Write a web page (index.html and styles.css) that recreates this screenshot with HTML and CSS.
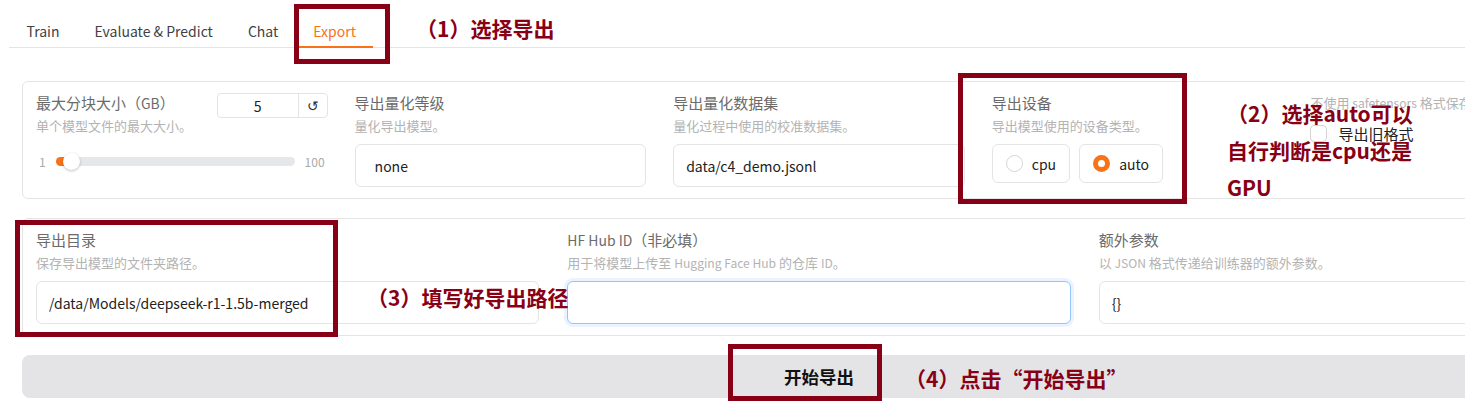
FILE: index.html
```html
<!DOCTYPE html>
<html lang="zh-CN">
<head>
    <meta charset="UTF-8">
    <meta name="viewport" content="width=device-width, initial-scale=1.0">
    <title>Export</title>
    <link rel="stylesheet" href="styles.css">
</head>
<body>
    <div class="app">
        <div class="tabs">
            <div class="tab">Train</div>
            <div class="tab">Evaluate &amp; Predict</div>
            <div class="tab">Chat</div>
            <div class="tab selected">Export</div>
        </div>

        <div class="panel">
            <div class="group row-five">
                <div class="field">
                    <div class="slider-head">
                        <span class="label">最大分块大小（<span class="en">GB</span>）</span>
                        <div class="number-box">
                            <input type="text" value="5">
                            <span class="reset">↺</span>
                        </div>
                    </div>
                    <span class="info">单个模型文件的最大大小。</span>
                    <div class="slider">
                        <span>1</span>
                        <div class="track">
                            <div class="fill"></div>
                            <div class="thumb"></div>
                        </div>
                        <span>100</span>
                    </div>
                </div>
                <div class="field">
                    <span class="label">导出量化等级</span>
                    <span class="info">量化导出模型。</span>
                    <input class="textbox dropdown" type="text" value="none">
                </div>
                <div class="field">
                    <span class="label">导出量化数据集</span>
                    <span class="info">量化过程中使用的校准数据集。</span>
                    <input class="textbox" type="text" value="data/c4_demo.jsonl">
                </div>
                <div class="field">
                    <span class="label">导出设备</span>
                    <span class="info">导出模型使用的设备类型。</span>
                    <div class="radios">
                        <label class="radio"><span class="dot"></span>cpu</label>
                        <label class="radio"><span class="dot checked"></span>auto</label>
                    </div>
                </div>
                <div class="field">
                    <span class="check-info">不使用 <span class="en">safetensors</span> 格式保存模型。</span>
                    <label class="check-row"><span class="check"></span>导出旧格式</label>
                </div>
            </div>

            <div class="group row-three">
                <div class="field">
                    <span class="label">导出目录</span>
                    <span class="info">保存导出模型的文件夹路径。</span>
                    <input class="textbox" type="text" value="/data/Models/deepseek-r1-1.5b-merged">
                </div>
                <div class="field">
                    <span class="label"><span class="en">HF Hub ID</span>（非必填）</span>
                    <span class="info">用于将模型上传至 <span class="en">Hugging Face Hub</span> 的仓库 <span class="en">ID</span>。</span>
                    <input class="textbox focused" type="text" value="">
                </div>
                <div class="field">
                    <span class="label">额外参数</span>
                    <span class="info">以 <span class="en">JSON</span> 格式传递给训练器的额外参数。</span>
                    <input class="textbox" type="text" value="{}">
                </div>
            </div>

            <div class="submit">开始导出</div>
        </div>
    </div>

    <!-- annotations drawn over the screenshot -->
    <div class="mark mark-tabs"></div>
    <div class="mark mark-device"></div>
    <div class="mark mark-dir"></div>
    <div class="mark mark-submit"></div>

    <div class="note note-1">（1）选择导出</div>
    <div class="note note-2">（2）选择auto可以<br>自行判断是cpu还是<br>GPU</div>
    <div class="note note-3">（3）填写好导出路径</div>
    <div class="note note-4">（4）点击“开始导出”</div>
</body>
</html>
```

FILE: styles.css
```css
body {
    margin: 0;
    width: 1465px;
    height: 412px;
    overflow: hidden;
    position: relative;
    background-color: white;
    font-family: "Noto Sans CJK SC", "Noto Sans", sans-serif;
    color: #27272a;
}
.en {
    font-size: 0.93em;
}
.app {
    width: 1640px;
    padding-left: 9px;
}
.tabs {
    display: flex;
    height: 47px;
    border-bottom: 1px solid #e4e4e7;
}
.tab {
    position: relative;
    height: 47px;
    box-sizing: border-box;
    padding: 20px 17.5px 0;
    font-size: 14px;
    line-height: 22px;
    color: #3f3f46;
}
.tab.selected {
    color: #f97316;
}
.tab.selected::after {
    content: "";
    position: absolute;
    left: 0;
    right: 0;
    bottom: -1px;
    height: 2px;
    background-color: #f97316;
}
.panel {
    padding: 33px 0 0 13px;
}
.group {
    display: grid;
    width: 1566px;
    padding: 11px 13px;
    margin-bottom: 19px;
    border: 1px solid #e5e5e5;
    border-radius: 6px;
}
.row-five {
    grid-template-columns: repeat(5, 1fr);
    column-gap: 27px;
}
.row-three {
    grid-template-columns: repeat(3, 1fr);
    column-gap: 28px;
}
.field {
    display: flex;
    flex-direction: column;
    min-width: 0;
}
.label {
    font-size: 15px;
    line-height: 20px;
    color: #6b6b6b;
    white-space: nowrap;
}
.info {
    margin-top: 4px;
    font-size: 13px;
    line-height: 18px;
    color: #b3b3b3;
    white-space: nowrap;
}
.textbox {
    margin-top: 9px;
    height: 43px;
    width: 100%;
    box-sizing: border-box;
    padding: 0 12px;
    border: 1px solid #e4e4e7;
    border-radius: 6px;
    font-family: inherit;
    font-size: 14px;
    color: #222;
    background-color: white;
    outline: none;
}
.dropdown {
    padding-left: 19px;
}
.textbox.focused {
    border-color: #93c5fd;
    box-shadow: 0 0 0 3px #eaf3ff;
}

/* slider */
.slider-head {
    display: flex;
    justify-content: space-between;
    height: 20px;
}
.number-box {
    display: flex;
    width: 111px;
    height: 25px;
    box-sizing: border-box;
    border: 1px solid #e4e4e7;
    border-radius: 4px;
}
.number-box input {
    width: 80px;
    border: none;
    padding: 0;
    text-align: center;
    font-family: inherit;
    font-size: 14px;
    color: #222;
    background: none;
    outline: none;
}
.reset {
    flex: 1;
    border-left: 1px solid #e4e4e7;
    text-align: center;
    font-size: 14px;
    line-height: 23px;
    color: #333;
}
.slider {
    display: flex;
    align-items: center;
    gap: 10px;
    height: 18px;
    margin-top: 17px;
    padding: 0 3px;
    font-size: 12px;
    color: #aaa;
}
.track {
    position: relative;
    flex: 1;
    height: 9px;
    border-radius: 5px;
    background-color: #e5e7eb;
}
.fill {
    position: absolute;
    left: 0;
    top: 0;
    bottom: 0;
    width: 14px;
    border-radius: 5px;
    background-color: #f97316;
}
.thumb {
    position: absolute;
    left: 7px;
    top: -4px;
    width: 17px;
    height: 17px;
    border-radius: 50%;
    background-color: white;
    box-shadow: 0 1px 3px rgba(0, 0, 0, 0.25);
}

/* radio */
.radios {
    display: flex;
    gap: 9px;
    margin-top: 9px;
}
.radio {
    display: flex;
    align-items: center;
    gap: 9px;
    height: 39px;
    box-sizing: border-box;
    padding: 0 13px;
    border: 1px solid #e4e4e7;
    border-radius: 6px;
    font-size: 14px;
    color: #222;
}
.dot {
    width: 17px;
    height: 17px;
    box-sizing: border-box;
    border: 1px solid #d4d4d8;
    border-radius: 50%;
}
.dot.checked {
    border: 5.5px solid #f97316;
}

/* checkbox */
.check-info {
    font-size: 13px;
    line-height: 20px;
    color: #b3b3b3;
    white-space: nowrap;
}
.check-row {
    display: flex;
    align-items: center;
    gap: 11px;
    height: 20px;
    margin-top: 10px;
    font-size: 15px;
    color: #222;
}
.check {
    width: 17px;
    height: 17px;
    box-sizing: border-box;
    border: 1px solid #d4d4d8;
    border-radius: 4px;
}

.submit {
    display: flex;
    align-items: center;
    justify-content: center;
    width: 1594px;
    height: 43px;
    border-radius: 8px;
    background-color: #e4e4e7;
    font-size: 17.5px;
    font-weight: 700;
    color: #111;
}

/* annotations */
.mark {
    position: absolute;
    box-sizing: border-box;
    border: 5px solid #880015;
}
.mark-tabs {
    left: 294px;
    top: 4px;
    width: 96px;
    height: 60px;
}
.mark-device {
    left: 958px;
    top: 73px;
    width: 229px;
    height: 131px;
}
.mark-dir {
    left: 15px;
    top: 220px;
    width: 323px;
    height: 117px;
}
.mark-submit {
    left: 728px;
    top: 344px;
    width: 154px;
    height: 57px;
}
.note {
    position: absolute;
    color: #880015;
    font-weight: 700;
    font-size: 21px;
    white-space: nowrap;
}
.note-1 {
    left: 416px;
    top: 15px;
    line-height: 26px;
}
.note-2 {
    left: 1227px;
    top: 95px;
    line-height: 37px;
}
.note-3 {
    left: 367px;
    top: 284px;
    line-height: 26px;
}
.note-4 {
    left: 905px;
    top: 365px;
    line-height: 26px;
}
```
